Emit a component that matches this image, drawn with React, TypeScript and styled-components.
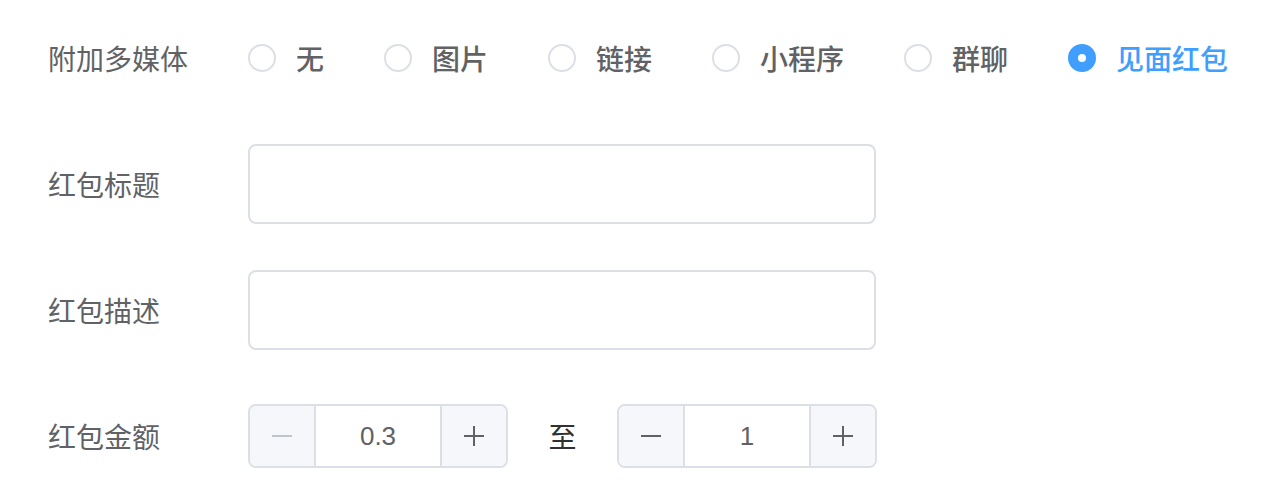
import React, { useState } from 'react'
import styled, { createGlobalStyle } from 'styled-components'

const GlobalStyle = createGlobalStyle`
  html, body {
    margin: 0;
    padding: 0;
    background: #fff;
  }
  body {
    font-family: "Liberation Sans", "Noto Sans CJK SC", sans-serif;
  }
`

const Form = styled.div`
  padding: 18px 0 0 48px;
  display: flex;
  flex-direction: column;
  gap: 46px;
`

const Item = styled.div`
  display: flex;
  align-items: center;
  height: 80px;
`

const Label = styled.div`
  width: 200px;
  flex-shrink: 0;
  font-family: "Noto Sans CJK SC", sans-serif;
  font-size: 28px;
  color: #606266;
  line-height: 80px;
`

const RadioGroup = styled.div`
  display: flex;
  align-items: center;
`

const RadioLabel = styled.label<{ $checked: boolean }>`
  display: flex;
  align-items: center;
  margin-right: 60px;
  cursor: pointer;
  font-family: "Noto Sans CJK SC", sans-serif;
  font-size: 28px;
  font-weight: 500;
  color: ${(p) => (p.$checked ? '#409eff' : '#606266')};
  &:last-child {
    margin-right: 0;
  }
`

const RadioDot = styled.span<{ $checked: boolean }>`
  box-sizing: border-box;
  width: 28px;
  height: 28px;
  border-radius: 50%;
  border: 2px solid ${(p) => (p.$checked ? '#409eff' : '#dcdfe6')};
  background: ${(p) => (p.$checked ? '#409eff' : '#fff')};
  display: flex;
  align-items: center;
  justify-content: center;
  margin-right: 20px;
  &::after {
    content: '';
    width: 8px;
    height: 8px;
    border-radius: 50%;
    background: #fff;
    display: ${(p) => (p.$checked ? 'block' : 'none')};
  }
`

const TextInput = styled.input`
  box-sizing: border-box;
  width: 628px;
  height: 80px;
  border: 2px solid #dcdfe6;
  border-radius: 8px;
  padding: 0 30px;
  font-size: 28px;
  color: #606266;
  outline: none;
  background: #fff;
`

const NumberBox = styled.div`
  box-sizing: border-box;
  width: 260px;
  height: 64px;
  border: 2px solid #dcdfe6;
  border-radius: 8px;
  display: flex;
  overflow: hidden;
  background: #fff;
`

const StepButton = styled.button<{ $side: 'left' | 'right'; $disabled?: boolean }>`
  box-sizing: border-box;
  width: 66px;
  height: 100%;
  border: none;
  padding: 0;
  background: #f5f7fa;
  ${(p) => (p.$side === 'left' ? 'border-right: 2px solid #dcdfe6;' : 'border-left: 2px solid #dcdfe6;')}
  color: ${(p) => (p.$disabled ? '#c0c4cc' : '#606266')};
  display: flex;
  align-items: center;
  justify-content: center;
  cursor: ${(p) => (p.$disabled ? 'not-allowed' : 'pointer')};
  flex-shrink: 0;
`

const NumberValue = styled.div`
  flex: 1;
  display: flex;
  align-items: center;
  justify-content: center;
  font-family: "Liberation Sans", Arial, sans-serif;
  font-size: 26px;
  color: #606266;
`

const RangeSep = styled.span`
  width: 109px;
  text-align: center;
  font-family: "Noto Sans CJK SC", sans-serif;
  font-size: 28px;
  color: #303133;
`

const MinusIcon = () => (
  <svg width="22" height="22" viewBox="0 0 22 22">
    <path d="M1 11h20" stroke="currentColor" strokeWidth="2" />
  </svg>
)

const PlusIcon = () => (
  <svg width="22" height="22" viewBox="0 0 22 22">
    <path d="M1 11h20M11 1v20" stroke="currentColor" strokeWidth="2" />
  </svg>
)

const options = ['无', '图片', '链接', '小程序', '群聊', '见面红包']

const NumberInput = ({ value, min }: { value: number; min: number }) => (
  <NumberBox>
    <StepButton $side="left" $disabled={value <= min}>
      <MinusIcon />
    </StepButton>
    <NumberValue>{value}</NumberValue>
    <StepButton $side="right">
      <PlusIcon />
    </StepButton>
  </NumberBox>
)

export default function App() {
  const [media, setMedia] = useState('见面红包')

  return (
    <>
      <GlobalStyle />
      <Form>
        <Item>
          <Label>附加多媒体</Label>
          <RadioGroup>
            {options.map((o) => (
              <RadioLabel key={o} $checked={media === o} onClick={() => setMedia(o)}>
                <RadioDot $checked={media === o} />
                {o}
              </RadioLabel>
            ))}
          </RadioGroup>
        </Item>
        <Item>
          <Label>红包标题</Label>
          <TextInput />
        </Item>
        <Item>
          <Label>红包描述</Label>
          <TextInput />
        </Item>
        <Item>
          <Label>红包金额</Label>
          <NumberInput value={0.3} min={0.3} />
          <RangeSep>至</RangeSep>
          <NumberInput value={1} min={0.3} />
        </Item>
      </Form>
    </>
  )
}
